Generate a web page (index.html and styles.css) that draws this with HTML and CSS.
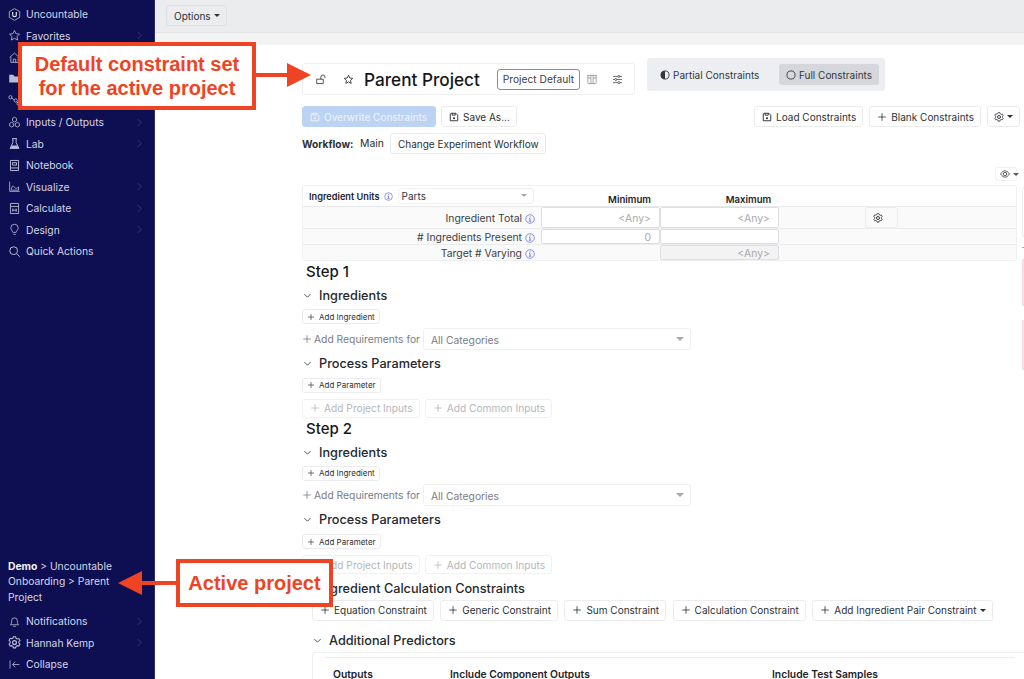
FILE: index.html

```html
<!DOCTYPE html>
<html lang="en">
<head>
    <meta charset="UTF-8">
    <meta name="viewport" content="width=device-width, initial-scale=1.0">
    <title>Constraints - Parent Project</title>
    <link rel="stylesheet" href="styles.css">
</head>
<body>
    <svg class="icon-defs" width="0" height="0" aria-hidden="true">
        <symbol id="i-plus" viewBox="0 0 16 16"><path d="M8 2v12M2 8h12" fill="none" stroke="currentColor" stroke-width="1.3"/></symbol>
        <symbol id="i-chev" viewBox="0 0 16 16"><path d="M5 2l6 6-6 6" fill="none" stroke="currentColor" stroke-width="1.1"/></symbol>
        <symbol id="i-down" viewBox="0 0 16 16"><path d="M2.5 5.5L8 11l5.5-5.5" fill="none" stroke="currentColor" stroke-width="1.4"/></symbol>
        <symbol id="i-save" viewBox="0 0 16 16"><path d="M3 2h8l3 3v9H2V3zM5 2v3h5V2" fill="none" stroke="currentColor" stroke-width="1.5"/><circle cx="8" cy="10" r="1.700" fill="currentColor"/></symbol>
        <symbol id="i-gear" viewBox="0 0 16 16"><path d="M6.600 1h2.800l.5 1.800 1.600.9 1.800-.5 1.400 2.400-1.300 1.300v1.800l1.300 1.300-1.400 2.400-1.800-.5-1.600.9-.5 1.800H6.600l-.5-1.800-1.600-.9-1.800.5-1.400-2.400 1.300-1.300V6.600L1.300 5.300l1.400-2.400 1.800.5 1.600-.9z" fill="none" stroke="currentColor" stroke-width="1.300"/><circle cx="8" cy="8" r="2.400" fill="none" stroke="currentColor" stroke-width="1.500"/></symbol>
        <symbol id="i-info" viewBox="0 0 16 16"><circle cx="8" cy="8" r="6.800" fill="none" stroke="currentColor" stroke-width="1.300"/><path d="M8 7v4.500M6.200 11.500h3.600M6.500 7H8M8 3.800v1.600" fill="none" stroke="currentColor" stroke-width="1.500"/></symbol>
    </svg>

    <nav class="sidebar">
        <div class="nav-list">
            <div class="nav-item"><svg class="nav-icon" viewBox="0 0 16 16"><path d="M8 .8l6.400 3.600v7.200L8 15.200l-6.400-3.600V4.400z" fill="none" stroke="currentColor"/><path d="M5.800 5v3.500a2.200 2.200 0 004.400 0V5" fill="none" stroke="#fff" stroke-width="1.300"/></svg>Uncountable</div>
            <div class="nav-item"><svg class="nav-icon" viewBox="0 0 16 16"><path d="M8 1.800l1.900 4 4.300.5-3.200 3 .9 4.300L8 11.500l-3.900 2.100.9-4.300-3.200-3 4.300-.5z" fill="none" stroke="currentColor"/></svg>Favorites<svg class="nav-chev"><use href="#i-chev"/></svg></div>
            <div class="nav-item"><svg class="nav-icon" viewBox="0 0 16 16"><path d="M2 8l6-5.500L14 8M3.500 7v7h9V7M6.500 14v-4h3v4" fill="none" stroke="currentColor"/></svg></div>
            <div class="nav-item"><svg class="nav-icon" viewBox="0 0 16 16"><path d="M1.500 13V3.500h5l1.500 2h6.500V13z" fill="currentColor"/></svg></div>
            <div class="nav-item"><svg class="nav-icon" viewBox="0 0 16 16"><path d="M4 4.500L8 7.500M11 9.500l1 1.500" fill="none" stroke="currentColor"/><circle cx="3" cy="4" r="2" fill="none" stroke="currentColor"/><circle cx="9.500" cy="8" r="2" fill="none" stroke="currentColor"/><circle cx="13" cy="12" r="2" fill="none" stroke="currentColor"/></svg></div>
            <div class="nav-item"><svg class="nav-icon" viewBox="0 0 16 16"><path d="M8 1.500l2.500 1.300V6L8 7.300 5.500 6V2.800zM4.500 7.800L7 9.100v3.200l-2.500 1.300L2 12.300V9.100zM11.500 7.800L14 9.100v3.200l-2.500 1.300L9 12.300V9.100z" fill="none" stroke="currentColor"/></svg>Inputs / Outputs<svg class="nav-chev"><use href="#i-chev"/></svg></div>
            <div class="nav-item"><svg class="nav-icon" viewBox="0 0 16 16"><path d="M6 2v5L2.500 14h11L10 7V2M5 2h6" fill="none" stroke="currentColor" stroke-width="1.200"/><path d="M4.500 10.500h7L13 14H3z" fill="currentColor"/></svg>Lab<svg class="nav-chev"><use href="#i-chev"/></svg></div>
            <div class="nav-item"><svg class="nav-icon" viewBox="0 0 16 16"><path d="M3 1.800h10v12.400H3zM3 11h10M5.500 4.500h5v3h-5z" fill="none" stroke="currentColor" stroke-width="1.200"/></svg>Notebook</div>
            <div class="nav-item"><svg class="nav-icon" viewBox="0 0 16 16"><path d="M2 2v12h12.500M4 11.500c1-5 2.500-5 4-2.500s3 1 5-.5v4H4z" fill="none" stroke="currentColor"/></svg>Visualize<svg class="nav-chev"><use href="#i-chev"/></svg></div>
            <div class="nav-item"><svg class="nav-icon" viewBox="0 0 16 16"><path d="M3 1.800h10v12.400H3zM3 5.500h10M6 8v4M10 8v4M5 10h6" fill="none" stroke="currentColor" stroke-width="1.100"/></svg>Calculate<svg class="nav-chev"><use href="#i-chev"/></svg></div>
            <div class="nav-item"><svg class="nav-icon" viewBox="0 0 16 16"><path d="M6 11.500C5.500 9.500 3.500 8.500 3.500 6a4.500 4.500 0 019 0c0 2.500-2 3.500-2.500 5.500zM6.500 14h3" fill="none" stroke="currentColor"/></svg>Design<svg class="nav-chev"><use href="#i-chev"/></svg></div>
            <div class="nav-item"><svg class="nav-icon" viewBox="0 0 16 16"><circle cx="7" cy="7" r="4.800" fill="none" stroke="currentColor" stroke-width="1.200"/><path d="M10.500 10.500L14.500 14.500" stroke="currentColor" stroke-width="1.200"/></svg>Quick Actions</div>
        </div>
        <div class="nav-bottom">
            <p class="breadcrumb"><strong>Demo</strong> &gt; Uncountable Onboarding &gt; Parent Project</p>
            <div class="nav-item"><svg class="nav-icon" viewBox="0 0 16 16"><path d="M3 12c1-1 1.500-2 1.500-5a3.500 3.500 0 017 0c0 3 .5 4 1.500 5zM6.500 14h3" fill="none" stroke="currentColor"/></svg>Notifications<svg class="nav-chev"><use href="#i-chev"/></svg></div>
            <div class="nav-item"><svg class="nav-icon"><use href="#i-gear"/></svg>Hannah Kemp<svg class="nav-chev"><use href="#i-chev"/></svg></div>
            <div class="nav-item"><svg class="nav-icon" viewBox="0 0 16 16"><path d="M2.500 3v10M14 8H6M9 4.500L5.500 8 9 11.500" fill="none" stroke="currentColor"/></svg>Collapse</div>
        </div>
    </nav>

    <div class="main">
        <div class="topbar">
            <button class="btn btn-options">Options<span class="caret"></span></button>
        </div>
        <div class="subbar"></div>

        <div class="content">
            <div class="title-row">
                <div class="title-card">
                    <svg class="ico-lock" viewBox="0 0 16 16"><path d="M1 7.500h9.500V14H1zM7 7.500V4.500a3 3 0 016 0v1.500" fill="none" stroke="currentColor" stroke-width="1.100"/></svg>
                    <svg class="ico-star" viewBox="0 0 16 16"><path d="M8 1.800l1.900 4 4.300.5-3.200 3 .9 4.300L8 11.500l-3.900 2.100.9-4.300-3.200-3 4.300-.5z" fill="none" stroke="currentColor" stroke-width="1.200"/></svg>
                    <h1>Parent Project</h1>
                    <span class="tag">Project Default</span>
                    <svg class="ico-box" viewBox="0 0 16 14"><path d="M1.500 1.500h13M2.500 1.500v10a1 1 0 001 1h9a1 1 0 001-1v-10M2.500 5h4v-3.500M13.500 5h-4v-3.500M6.500 5v7.500M9.500 5v7.500" fill="none" stroke="currentColor"/></svg>
                    <svg class="ico-sliders" viewBox="0 0 16 16"><path d="M1.500 3.500h13M1.500 8h13M1.500 12.500h13" fill="none" stroke="currentColor"/><circle cx="10" cy="3.500" r="1.500" fill="#fff" stroke="currentColor"/><circle cx="5.500" cy="8" r="1.500" fill="#fff" stroke="currentColor"/><circle cx="10" cy="12.500" r="1.500" fill="#fff" stroke="currentColor"/></svg>
                </div>
                <div class="mode-switch">
                    <span class="mode"><svg class="ico-mode" viewBox="0 0 16 16"><circle cx="8" cy="8" r="6.500" fill="none" stroke="currentColor" stroke-width="1.400"/><path d="M8 1.500a6.500 6.500 0 000 13z" fill="currentColor"/></svg>Partial Constraints</span>
                    <span class="mode mode-active"><svg class="ico-mode" viewBox="0 0 16 16"><circle cx="8" cy="8" r="6.500" fill="none" stroke="currentColor" stroke-width="1.400"/></svg>Full Constraints</span>
                </div>
            </div>

            <div class="action-row">
                <button class="btn btn-disabled-primary"><svg class="ico"><use href="#i-save"/></svg>Overwrite Constraints</button>
                <button class="btn"><svg class="ico"><use href="#i-save"/></svg>Save As...</button>
                <div class="spacer"></div>
                <button class="btn"><svg class="ico"><use href="#i-save"/></svg>Load Constraints</button>
                <button class="btn"><svg class="ico"><use href="#i-plus"/></svg>Blank Constraints</button>
                <button class="btn btn-icon"><svg class="ico"><use href="#i-gear"/></svg><span class="caret"></span></button>
            </div>

            <div class="workflow-row">
                <strong>Workflow:</strong><span class="workflow-name">Main</span>
                <button class="btn">Change Experiment Workflow</button>
            </div>

            <div class="eye-row">
                <button class="btn btn-eye"><svg class="ico-eye" viewBox="0 0 16 16"><path d="M1 8c2-3.500 4.500-5 7-5s5 1.500 7 5c-2 3.500-4.500 5-7 5s-5-1.500-7-5z" fill="none" stroke="currentColor" stroke-width="1.500"/><circle cx="8" cy="8" r="2.800" fill="none" stroke="currentColor" stroke-width="1.500"/></svg><span class="caret"></span></button>
            </div>

            <div class="totals">
                <div class="totals-head">
                    <div class="units"><strong>Ingredient Units</strong><svg class="info"><use href="#i-info"/></svg>
                        <div class="select select-units">Parts<span class="select-caret"></span></div>
                    </div>
                    <div class="col-title">Minimum</div>
                    <div class="col-title">Maximum</div>
                </div>
                <div class="totals-row row-tall">
                    <div class="row-label">Ingredient Total<svg class="info"><use href="#i-info"/></svg></div>
                    <div class="cell cell-input">&lt;Any&gt;</div>
                    <div class="cell cell-input">&lt;Any&gt;</div>
                    <button class="btn btn-row-gear"><svg class="ico"><use href="#i-gear"/></svg></button>
                </div>
                <div class="totals-row">
                    <div class="row-label">#&nbsp;Ingredients Present<svg class="info"><use href="#i-info"/></svg></div>
                    <div class="cell cell-input">0</div>
                    <div class="cell cell-input"></div>
                </div>
                <div class="totals-row row-last">
                    <div class="row-label">Target #&nbsp;Varying<svg class="info"><use href="#i-info"/></svg></div>
                    <div class="cell"></div>
                    <div class="cell cell-input cell-disabled">&lt;Any&gt;</div>
                </div>
            </div>

            <section class="step">
                <h2>Step 1</h2>
                <h3><svg class="ico-down"><use href="#i-down"/></svg>Ingredients</h3>
                <button class="btn btn-small"><svg class="ico-small"><use href="#i-plus"/></svg>Add Ingredient</button>
                <div class="requirements">
                    <span class="req-label"><svg class="ico-req"><use href="#i-plus"/></svg>Add Requirements for</span>
                    <div class="select select-cat">All Categories<span class="select-caret"></span></div>
                </div>
                <h3><svg class="ico-down"><use href="#i-down"/></svg>Process Parameters</h3>
                <button class="btn btn-small"><svg class="ico-small"><use href="#i-plus"/></svg>Add Parameter</button>
                <div class="inputs-row">
                    <button class="btn btn-muted"><svg class="ico"><use href="#i-plus"/></svg>Add Project Inputs</button>
                    <button class="btn btn-muted"><svg class="ico"><use href="#i-plus"/></svg>Add Common Inputs</button>
                </div>
            </section>

            <section class="step">
                <h2>Step 2</h2>
                <h3><svg class="ico-down"><use href="#i-down"/></svg>Ingredients</h3>
                <button class="btn btn-small"><svg class="ico-small"><use href="#i-plus"/></svg>Add Ingredient</button>
                <div class="requirements">
                    <span class="req-label"><svg class="ico-req"><use href="#i-plus"/></svg>Add Requirements for</span>
                    <div class="select select-cat">All Categories<span class="select-caret"></span></div>
                </div>
                <h3><svg class="ico-down"><use href="#i-down"/></svg>Process Parameters</h3>
                <button class="btn btn-small"><svg class="ico-small"><use href="#i-plus"/></svg>Add Parameter</button>
                <div class="inputs-row">
                    <button class="btn btn-muted"><svg class="ico"><use href="#i-plus"/></svg>Add Project Inputs</button>
                    <button class="btn btn-muted"><svg class="ico"><use href="#i-plus"/></svg>Add Common Inputs</button>
                </div>
            </section>

            <section class="calc">
                <h3 class="calc-title">Ingredient Calculation Constraints</h3>
                <div class="calc-buttons">
                    <button class="btn"><svg class="ico"><use href="#i-plus"/></svg>Equation Constraint</button>
                    <button class="btn"><svg class="ico"><use href="#i-plus"/></svg>Generic Constraint</button>
                    <button class="btn"><svg class="ico"><use href="#i-plus"/></svg>Sum Constraint</button>
                    <button class="btn"><svg class="ico"><use href="#i-plus"/></svg>Calculation Constraint</button>
                    <button class="btn"><svg class="ico"><use href="#i-plus"/></svg>Add Ingredient Pair Constraint<span class="caret"></span></button>
                </div>
                <h3 class="predictors-title"><svg class="ico-down"><use href="#i-down"/></svg>Additional Predictors</h3>
                <div class="predictors">
                    <div class="predictors-head">
                        <span class="pred-outputs">Outputs</span>
                        <span class="pred-component">Include Component Outputs</span>
                        <span>Include Test Samples</span>
                    </div>
                </div>
            </section>
        </div>

        <div class="edge-panel"></div>
        <div class="edge-tick"></div>
        <div class="edge-pink edge-pink-1"></div>
        <div class="edge-pink edge-pink-2"></div>
    </div>

    <!-- annotations drawn on top of the screenshot -->
    <div class="callout callout-default">Default constraint set<br>for the active project</div>
    <svg class="arrow arrow-default" viewBox="0 0 56 24"><path d="M0 10h31V0l24 12-24 12V14H0z" fill="#ef4423"/></svg>
    <div class="callout callout-active">Active project</div>
    <svg class="arrow arrow-active" viewBox="0 0 58 24"><path d="M58 10H24V0L0 12l24 12V14h34z" fill="#ef4423"/></svg>
</body>
</html>
```

FILE: styles.css

```css
* {
    box-sizing: border-box;
}

html, body {
    height: 100%;
}

body {
    margin: 0;
    height: 679px;
    overflow: hidden;
    display: flex;
    position: relative;
    font-family: 'Inter', 'Liberation Sans', sans-serif;
    font-size: 10.4px;
    color: #1f2328;
    background: white;
}

.icon-defs {
    position: absolute;
}

/* sidebar */
.sidebar {
    width: 155px;
    flex-shrink: 0;
    background: #0e0f52;
    color: #d5d6e6;
    display: flex;
    flex-direction: column;
    justify-content: space-between;
    padding: 3.5px 0 4px 8px;
    border-right: 1px solid #2b2c6b;
}

.nav-item {
    height: 21.55px;
    display: flex;
    align-items: center;
    font-size: 10.3px;
    position: relative;
}

.nav-icon {
    width: 13px;
    height: 13px;
    margin-right: 5px;
    color: #b9bbd6;
    flex-shrink: 0;
}

.nav-chev {
    position: absolute;
    left: 127px;
    width: 9px;
    height: 9px;
    color: #4f5187;
}

.breadcrumb {
    margin: 0 0 5px;
    width: 115px;
    line-height: 15.6px;
    font-size: 10.3px;
}

.breadcrumb strong {
    color: #f2f2f8;
}

/* top */
.main {
    flex: 1;
    min-width: 0;
    position: relative;
    overflow: hidden;
}

.topbar {
    height: 33px;
    background: #ebecee;
    border-bottom: 1px solid #e3e4e7;
    padding: 5px 11px;
}

.subbar {
    height: 12px;
    background: #f3f3f4;
}

.content {
    padding: 17px 0 0 147px;
}

.btn {
    display: inline-flex;
    align-items: center;
    height: 21px;
    padding: 0 6px 0 7px;
    background: white;
    border: 1px solid #ececef;
    border-radius: 3px;
    font-family: inherit;
    font-size: 10px;
    color: #2b2f36;
    white-space: nowrap;
    flex-shrink: 0;
}

.btn-options {
    background: #ebecee;
    border-color: #dfe0e3;
}

.caret {
    width: 0;
    height: 0;
    margin-left: 3px;
    border-left: 3px solid transparent;
    border-right: 3px solid transparent;
    border-top: 3px solid currentColor;
}

.ico {
    width: 10px;
    height: 10px;
    margin-right: 4px;
    flex-shrink: 0;
}

/* title */
.title-row {
    display: flex;
    align-items: flex-start;
    gap: 12px;
}

.title-card {
    width: 333px;
    height: 32px;
    margin-top: 1px;
    border: 1px solid #efeff1;
    border-radius: 3px;
    display: flex;
    align-items: center;
    padding-left: 13px;
}

.ico-lock {
    width: 11px;
    height: 11px;
    margin-right: 16px;
}

.ico-star {
    width: 11px;
    height: 11px;
    margin-right: 10px;
}

h1 {
    margin: 0 17px 0 0;
    font-size: 17.2px;
    font-weight: 500;
    color: #15171a;
    white-space: nowrap;
}

.tag {
    border: 1px solid #8a8d92;
    border-radius: 3px;
    height: 21px;
    padding: 0 5px;
    display: flex;
    align-items: center;
    font-size: 10.2px;
    color: #3d4046;
    white-space: nowrap;
}

.ico-box {
    width: 12px;
    height: 11px;
    margin-left: 6px;
    color: #85888e;
}

.ico-sliders {
    width: 11px;
    height: 11px;
    margin-left: 14px;
    color: #333;
}

.mode-switch {
    width: 238px;
    height: 33px;
    background: #eceef1;
    border-radius: 3px;
    display: flex;
    align-items: center;
    justify-content: space-between;
    padding: 0 6px 0 13px;
    margin-top: -4px;
    font-size: 10px;
}

.mode {
    display: flex;
    align-items: center;
    color: #33363b;
}

.ico-mode {
    width: 10px;
    height: 10px;
    margin-right: 3px;
}

.mode-active {
    background: #d5d7dc;
    border-radius: 3px;
    height: 21px;
    padding: 0 7px;
}

/* action rows */
.action-row {
    display: flex;
    gap: 6px;
    margin-top: 11px;
    width: 718px;
}

.spacer {
    flex: 1;
}

.btn-disabled-primary {
    width: 134px;
    margin-right: -1px;
    background: #bdd3f3;
    border-color: #bdd3f3;
    color: #eef3fb;
}

.btn-icon {
    width: 33px;
    padding: 0;
    justify-content: center;
}

.btn-icon .ico {
    margin-right: 0;
}

.workflow-row {
    display: flex;
    align-items: center;
    margin-top: 6px;
    color: #2b2f36;
}

.workflow-row strong {
    font-size: 10.2px;
    font-weight: 700;
    width: 58px;
}

.workflow-name {
    width: 30px;
}

.eye-row {
    display: flex;
    justify-content: flex-end;
    width: 715px;
    margin-top: 13px;
}

.btn-eye {
    height: 14px;
    width: 22px;
    padding: 0 0 0 4px;
    border-color: #f0f0f2;
    color: #55585e;
}

.ico-eye {
    width: 10px;
    height: 10px;
    flex-shrink: 0;
}

/* totals */
.totals {
    width: 715px;
    margin-top: 4px;
    border: 1px solid #eeeff1;
    border-radius: 3px;
}

.totals-head {
    display: flex;
    height: 21px;
    border-bottom: 1px solid #e8e9eb;
    align-items: center;
}

.units {
    width: 238px;
    display: flex;
    align-items: center;
    padding-left: 6px;
    font-size: 9.2px;
}

.units strong {
    font-weight: 600;
}

.select {
    display: flex;
    align-items: center;
    position: relative;
    background: white;
    border: 1px solid #f0f0f2;
    border-radius: 3px;
    color: #55585e;
}

.select-units {
    width: 136px;
    height: 16px;
    margin-left: 5px;
    padding-left: 3px;
    font-size: 10px;
    color: #33363b;
}

.select-units .select-caret {
    border-left-width: 3px;
    border-right-width: 3px;
    border-top-width: 3px;
}

.select-caret {
    position: absolute;
    right: 6px;
    top: 50%;
    margin-top: -2px;
    border-left: 4px solid transparent;
    border-right: 4px solid transparent;
    border-top: 4px solid #a5a7ab;
}

.col-title {
    width: 119px;
    text-align: center;
    font-weight: 600;
    font-size: 9.6px;
    padding: 6px 0 0 58px;
    white-space: nowrap;
}

.totals-row {
    display: flex;
    height: 16px;
    background: #fafafa;
    border-bottom: 1px solid #ebecee;
    position: relative;
}

.row-last {
    height: 15px;
    border-bottom: none;
}

.row-tall {
    height: 22px;
}

.row-label {
    width: 238px;
    display: flex;
    align-items: center;
    justify-content: flex-end;
    padding: 2px 6px 0 0;
    color: #3b3e44;
}

.row-label .info {
    margin-left: 3px;
}

.info {
    width: 10px;
    height: 10px;
    margin-left: 4px;
    color: #6f76e4;
    flex-shrink: 0;
}

.units .info {
    width: 9px;
    height: 9px;
}

.cell {
    width: 119px;
}

.cell-input {
    background: white;
    border: 1px solid #dedfe2;
    border-radius: 2px;
    color: #a8aaae;
    padding: 1px 8px 0 0;
    display: flex;
    align-items: center;
    justify-content: flex-end;
}

.cell-disabled {
    background: #f3f3f4;
}

.btn-row-gear {
    position: absolute;
    left: 562px;
    top: 0;
    width: 33px;
    height: 21px;
    background: #fafafa;
    padding-left: 7px;
}

/* steps */
h2 {
    margin: 0 0 4.5px;
    padding: 1px 0 0 4px;
    height: 19px;
    font-size: 15px;
    font-weight: 500;
    line-height: 19px;
    color: #15171a;
}

h3 {
    display: flex;
    align-items: center;
    margin: 0;
    height: 20px;
    padding-top: 2px;
    font-size: 12.7px;
    font-weight: 500;
    color: #25282d;
}

.requirements + h3 {
    padding-top: 0;
}

.ico-down {
    width: 9px;
    height: 9px;
    margin: 0 7px 0 1px;
    flex-shrink: 0;
}

.btn-small {
    display: flex;
    height: 15px;
    margin-top: 4.5px;
    padding: 0 4px;
    width: fit-content;
    font-size: 8px;
}

.ico-small {
    width: 8px;
    height: 8px;
    margin-right: 4px;
}

.requirements {
    display: flex;
    align-items: center;
    margin: 3.5px 0;
}

.req-label {
    display: flex;
    align-items: center;
    color: #7a7d83;
    width: 121px;
    font-size: 10.3px;
    white-space: nowrap;
}

.ico-req {
    width: 10px;
    height: 10px;
    margin-right: 2px;
}

.select-cat {
    width: 268px;
    height: 22px;
    padding: 2px 0 0 7px;
    font-size: 10.3px;
    color: #7a7d83;
}

.inputs-row {
    display: flex;
    gap: 5px;
    margin-top: 6px;
}

.btn-muted {
    height: 19px;
    font-size: 10.2px;
    color: #b4b6ba;
    border-color: #f1f1f3;
}

/* calc + predictors */
.calc-title {
    padding-left: 17px;
    margin-top: 3px;
}

.calc-buttons {
    display: flex;
    gap: 6.5px;
    padding-left: 10px;
    margin-top: 2.5px;
}

.predictors-title {
    padding-left: 10px;
    margin-top: 8.5px;
}

.predictors {
    margin: 3px 0 0 10px;
    width: 760px;
    height: 60px;
    border: 1px solid #eeeff1;
    border-radius: 3px;
    padding-top: 4px;
}

.predictors-head {
    width: 690px;
    margin-left: 12px;
    padding: 10px 0 0 8px;
    border-top: 1px solid #ececee;
    display: flex;
    font-size: 10.3px;
    font-weight: 600;
}

.pred-outputs {
    width: 117px;
}

.pred-component {
    width: 322px;
}

/* bits cut off at the right edge */
.edge-panel {
    position: absolute;
    left: 867px;
    top: 187px;
    width: 10px;
    height: 50px;
    border: 1px solid #ececee;
    border-right: none;
    border-radius: 3px 0 0 3px;
}

.edge-tick {
    position: absolute;
    left: 867px;
    top: 247px;
    width: 2px;
    height: 1px;
    background: #a8aaae;
}

.edge-pink {
    position: absolute;
    left: 867px;
    width: 2px;
    background: #f8dfe3;
}

.edge-pink-1 {
    top: 259px;
    height: 47px;
}

.edge-pink-2 {
    top: 320px;
    height: 50px;
}

/* annotations */
.callout {
    position: absolute;
    background: white;
    border: 4px solid #ef4423;
    color: #ef4423;
    font-family: 'Liberation Sans', Arial, sans-serif;
    font-weight: 700;
    text-align: center;
    white-space: nowrap;
    display: flex;
    align-items: center;
    justify-content: center;
}

.callout-default {
    left: 18px;
    top: 42px;
    width: 238px;
    height: 68px;
    font-size: 20px;
    line-height: 24px;
}

.callout-active {
    left: 176px;
    top: 559px;
    width: 157px;
    height: 48px;
    font-size: 20px;
}

.arrow {
    position: absolute;
}

.arrow-default {
    left: 256px;
    top: 63px;
    width: 56px;
    height: 24px;
}

.arrow-active {
    left: 118px;
    top: 571px;
    width: 58px;
    height: 24px;
}
```
